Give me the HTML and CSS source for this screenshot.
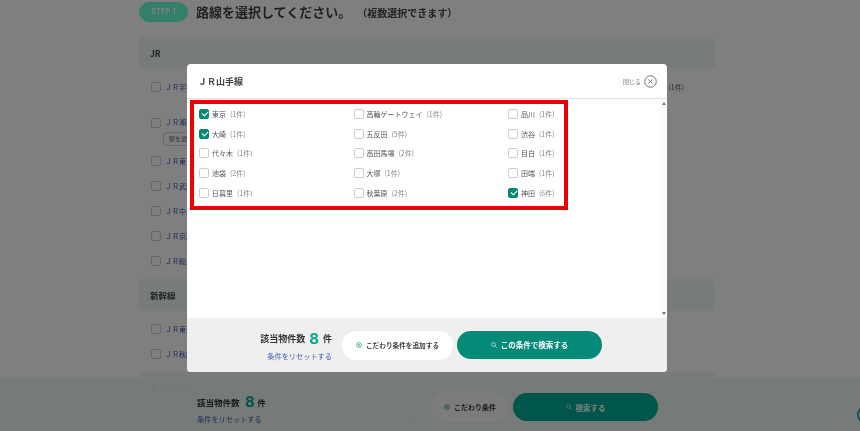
FILE: index.html
```html
<!DOCTYPE html>
<html lang="ja">
<head>
<meta charset="utf-8">
<title>路線を選択</title>
<link rel="stylesheet" href="styles.css">
</head>
<body>
<main class="page">
  <header class="step">
    <span class="pill">STEP 1</span>
    <h1>路線を選択してください。</h1>
    <span class="step-note">（複数選択できます）</span>
  </header>

  <section class="group">
    <h2>JR</h2>
    <ul class="lines">
      <li class="line"><span class="box"></span><span class="line-name">ＪＲ宇都宮線</span><span class="line-end">(1件)</span></li>
      <li class="line tall"><span class="box"></span><div class="stack"><span class="line-name">ＪＲ湘南新宿ライン</span><span class="chip">駅を選択</span></div></li>
      <li class="line"><span class="box"></span><span class="line-name">ＪＲ東海道線</span></li>
      <li class="line"><span class="box"></span><span class="line-name">ＪＲ武蔵野線</span></li>
      <li class="line"><span class="box"></span><span class="line-name">ＪＲ中央線</span></li>
      <li class="line"><span class="box"></span><span class="line-name">ＪＲ京葉線</span></li>
      <li class="line"><span class="box"></span><span class="line-name">ＪＲ総武線</span></li>
    </ul>
  </section>

  <section class="group">
    <h2>新幹線</h2>
    <ul class="lines">
      <li class="line"><span class="box"></span><span class="line-name">ＪＲ東海道新幹線</span></li>
      <li class="line"><span class="box"></span><span class="line-name">ＪＲ秋田新幹線</span></li>
    </ul>
  </section>

  <section class="group">
    <h2>東京メトロ</h2>
    <ul class="lines">
      <li class="line"><span class="box"></span><span class="line-name metro">東京メトロ銀座線</span><span class="box second"></span><span class="line-name metro">東京メトロ丸ノ内線</span></li>
    </ul>
  </section>
</main>

<div class="bar">
  <div class="bar-info">
    <p class="total total-bar">該当物件数<b class="num num-bar">8</b>件</p>
    <a class="reset">条件をリセットする</a>
  </div>
  <div class="bar-buttons">
    <button class="btn-more">
      <svg class="ico" viewBox="0 0 12 12"><circle cx="6" cy="6" r="5" fill="none" stroke="#00806f" stroke-width="1.2"/><path d="M6 3.5v5M3.5 6h5" stroke="#00806f" stroke-width="1.2"/></svg>こだわり条件
    </button>
    <button class="btn-search">
      <svg class="ico" viewBox="0 0 12 12"><circle cx="5" cy="5" r="3.8" fill="none" stroke="#fff" stroke-width="1.2"/><path d="M8 8l3 3" stroke="#fff" stroke-width="1.2"/></svg>検索する
    </button>
  </div>
</div>
<span class="help"></span>

<div class="overlay"></div>

<div class="modal">
  <header class="modal-head">
    <h3>ＪＲ山手線</h3>
    <span class="close">閉じる
      <svg class="close-ico" viewBox="0 0 14 14"><circle cx="7" cy="7" r="6.2" fill="none" stroke="#666" stroke-width="1"/><path d="M4.8 4.8l4.4 4.4M9.2 4.8l-4.4 4.4" stroke="#666" stroke-width="1"/></svg>
    </span>
  </header>
  <div class="modal-body">
    <div class="modal-scroll">
      <ul class="stations">
        <li class="st"><span class="box on"></span>東京<em>(1件)</em></li>
        <li class="st"><span class="box"></span>高輪ゲートウェイ<em>(1件)</em></li>
        <li class="st"><span class="box"></span>品川<em>(1件)</em></li>
        <li class="st"><span class="box on"></span>大崎<em>(1件)</em></li>
        <li class="st"><span class="box"></span>五反田<em>(5件)</em></li>
        <li class="st"><span class="box"></span>渋谷<em>(1件)</em></li>
        <li class="st"><span class="box"></span>代々木<em>(1件)</em></li>
        <li class="st"><span class="box"></span>高田馬場<em>(2件)</em></li>
        <li class="st"><span class="box"></span>目白<em>(1件)</em></li>
        <li class="st"><span class="box"></span>池袋<em>(2件)</em></li>
        <li class="st"><span class="box"></span>大塚<em>(1件)</em></li>
        <li class="st"><span class="box"></span>田端<em>(1件)</em></li>
        <li class="st"><span class="box"></span>日暮里<em>(1件)</em></li>
        <li class="st"><span class="box"></span>秋葉原<em>(2件)</em></li>
        <li class="st"><span class="box on"></span>神田<em>(6件)</em></li>
      </ul>
    </div>
    <div class="scrollbar"><span class="arrow up"></span><span class="arrow down"></span></div>
  </div>
  <footer class="modal-foot">
    <div class="foot-info">
      <p class="total">該当物件数<b class="num">8</b>件</p>
      <a class="reset">条件をリセットする</a>
    </div>
    <button class="foot-more">
      <svg class="ico" viewBox="0 0 12 12"><circle cx="6" cy="6" r="5" fill="none" stroke="#00806f" stroke-width="1.1"/><path d="M6 3.5v5M3.5 6h5" stroke="#00806f" stroke-width="1.1"/></svg>こだわり条件を追加する
    </button>
    <button class="foot-search">
      <svg class="ico" viewBox="0 0 12 12"><circle cx="5" cy="5" r="3.8" fill="none" stroke="#fff" stroke-width="1.2"/><path d="M8 8l3 3" stroke="#fff" stroke-width="1.2"/></svg>この条件で検索する
    </button>
  </footer>
</div>
</body>
</html>
```
FILE: styles.css
```css
* { box-sizing: border-box; }
html, body { margin: 0; padding: 0; }
body {
  position: relative;
  width: 860px;
  height: 431px;
  overflow: hidden;
  background: #fff;
  color: #333;
  font-family: "Noto Sans CJK JP", "Noto Sans", sans-serif;
  filter: blur(.4px);
}
ul { list-style: none; margin: 0; padding: 0; }
h1, h2, h3, p { margin: 0; }
button { font-family: inherit; border: 0; padding: 0; display: flex; align-items: center; justify-content: center; }

/* page behind the dialog */
.page { width: 576px; margin-left: 139px; padding-top: 2px; }
.step { display: flex; align-items: center; height: 20px; }
.pill {
  width: 49px; height: 20px; border-radius: 10px;
  background: #68ffd2; color: #fff;
  font: 700 7px/20px "Inter", sans-serif; letter-spacing: .3px; text-align: center;
  margin-right: 8px;
}
h1 { font-size: 13px; font-weight: 700; line-height: 20px; color: #444; }
.step-note { font-size: 10px; font-weight: 700; color: #444; margin-left: 6px; }
.group { margin-top: 8px; }
.step + .group { margin-top: 15px; }
.group h2 {
  height: 32px; padding-left: 11px; border-radius: 4px;
  background: #eef9f5; font-size: 8.5px; font-weight: 700; line-height: 32px; color: #444;
}
.lines { display: flex; flex-direction: column; gap: 5px; padding-top: 8px; }
.line { display: flex; align-items: center; height: 20px; padding-left: 12px; font-size: 7px; }
.line.tall { height: 32px; margin-top: 12px; align-items: flex-start; padding-top: 4px; }
.line-name { flex: none; white-space: nowrap; color: #3a55a8; margin-left: 4px; }
.line-name.metro { color: #a9b3b0; }
.line-end { margin-left: auto; margin-right: 31px; color: #555; }
.stack { display: flex; flex-direction: column; align-items: flex-start; }
.stack .line-name { line-height: 8px; }
.chip {
  margin: 6px 0 0 2px; padding: 0 5px; height: 14px; border: 1px solid #ccc; border-radius: 4px;
  font-size: 6px; line-height: 12px; color: #666;
}
.box {
  display: block; position: relative; flex: none;
  width: 10px; height: 10px; border: 1px solid #ccc; border-radius: 2px; background: #fff;
}
.box.second { margin-left: 121px; }
.box.on { background: #078775; border-color: #078775; }
.box.on::after {
  content: ""; position: absolute; left: 2.5px; top: .6px;
  width: 3px; height: 5.2px;
  border: solid #fff; border-width: 0 1px 1px 0;
  transform: rotate(45deg);
}

/* fixed bar */
.bar {
  position: absolute; left: 0; right: 0; top: 378px; height: 53px;
  background: rgba(236, 246, 243, .96);
  display: flex;
  padding-left: 197px;
}
.bar-info { width: 235px; padding-top: 16px; }
.total { display: flex; align-items: center; font-size: 9px; font-weight: 700; color: #333; height: 16px; }
.total-bar { font-size: 8.5px; }
.num { font: 700 15px/16px "Inter", sans-serif; color: #00a78f; margin: 0 4px 0 4px; }
.num-bar { color: #00ac96; margin: 0 2.5px 0 5.5px; }
.reset { display: block; font-size: 7.2px; line-height: 12px; color: #3f62b8; margin-top: 3px; }
.bar-buttons { display: flex; gap: 5px; padding-top: 15px; }
.btn-more, .btn-search { height: 28px; border-radius: 14px; }
.btn-more { width: 76px; background: #f6f8f7; font-size: 7px; font-weight: 700; color: #333; border: 1px solid #fff; }
.btn-search { width: 145px; background: #00ac96; color: #fff; font-size: 7.5px; font-weight: 700; }
.ico { width: 6px; height: 6px; margin-right: 4px; flex: none; }
.help {
  position: absolute; left: 857px; top: 406px; width: 18px; height: 18px;
  border-radius: 50%; border: 2px solid #00ac96; background: #fff;
}

.overlay { position: absolute; inset: 0; background: rgba(0, 0, 0, .5); }

/* dialog */
.modal {
  position: absolute; left: 187px; top: 64px; width: 480px; height: 308px;
  display: flex; flex-direction: column;
  background: #fff; border-radius: 4px; overflow: hidden;
}
.modal-head {
  flex: none; height: 35px; padding: 0 10px 0 11px;
  display: flex; align-items: center; justify-content: space-between;
  border-bottom: 1px solid #e4e4e4;
}
.modal-head h3 { font-size: 9px; font-weight: 700; color: #444; }
.close { display: flex; align-items: center; gap: 3px; font-size: 6px; color: #777; }
.close-ico { width: 13px; height: 13px; }
.modal-body { flex: 1; display: flex; min-height: 0; }
.modal-scroll { flex: 1; }
.stations {
  display: grid;
  grid-template-columns: 154.5px 154.5px 1fr;
  grid-auto-rows: 19.75px;
  width: 378px; height: 110px; margin: 1px 0 0 3px;
  padding: 0 0 0 5px;
  border: 4px solid #ee0000;
}
.st { display: flex; align-items: center; font-size: 7px; color: #555; white-space: nowrap; }
.st .box { margin-right: 3px; }
.st em { font-style: normal; color: #888; margin-left: 4px; }
.scrollbar {
  flex: none; width: 7px; background: #fbfbfb;
  display: flex; flex-direction: column; justify-content: space-between; align-items: center;
  padding: 3px 0;
}
.arrow { width: 0; height: 0; border-left: 2.5px solid transparent; border-right: 2.5px solid transparent; }
.arrow.up { border-bottom: 3px solid #777; }
.arrow.down { border-top: 3px solid #777; }
.modal-foot {
  flex: none; height: 54px; padding-right: 65px;
  background: #efefef;
  display: flex; align-items: center; justify-content: flex-end;
}
.foot-info { margin-right: 10px; display: flex; flex-direction: column; align-items: flex-end; margin-top: 2px; }
.foot-more {
  width: 111px; height: 29px; border-radius: 15px; background: #fff;
  font-size: 6.65px; font-weight: 700; color: #444; margin-right: 4px;
}
.foot-search {
  width: 145px; height: 28px; border-radius: 14px; background: #038a78;
  font-size: 7.5px; font-weight: 700; color: #fff; margin-top: -1px;
}
```
